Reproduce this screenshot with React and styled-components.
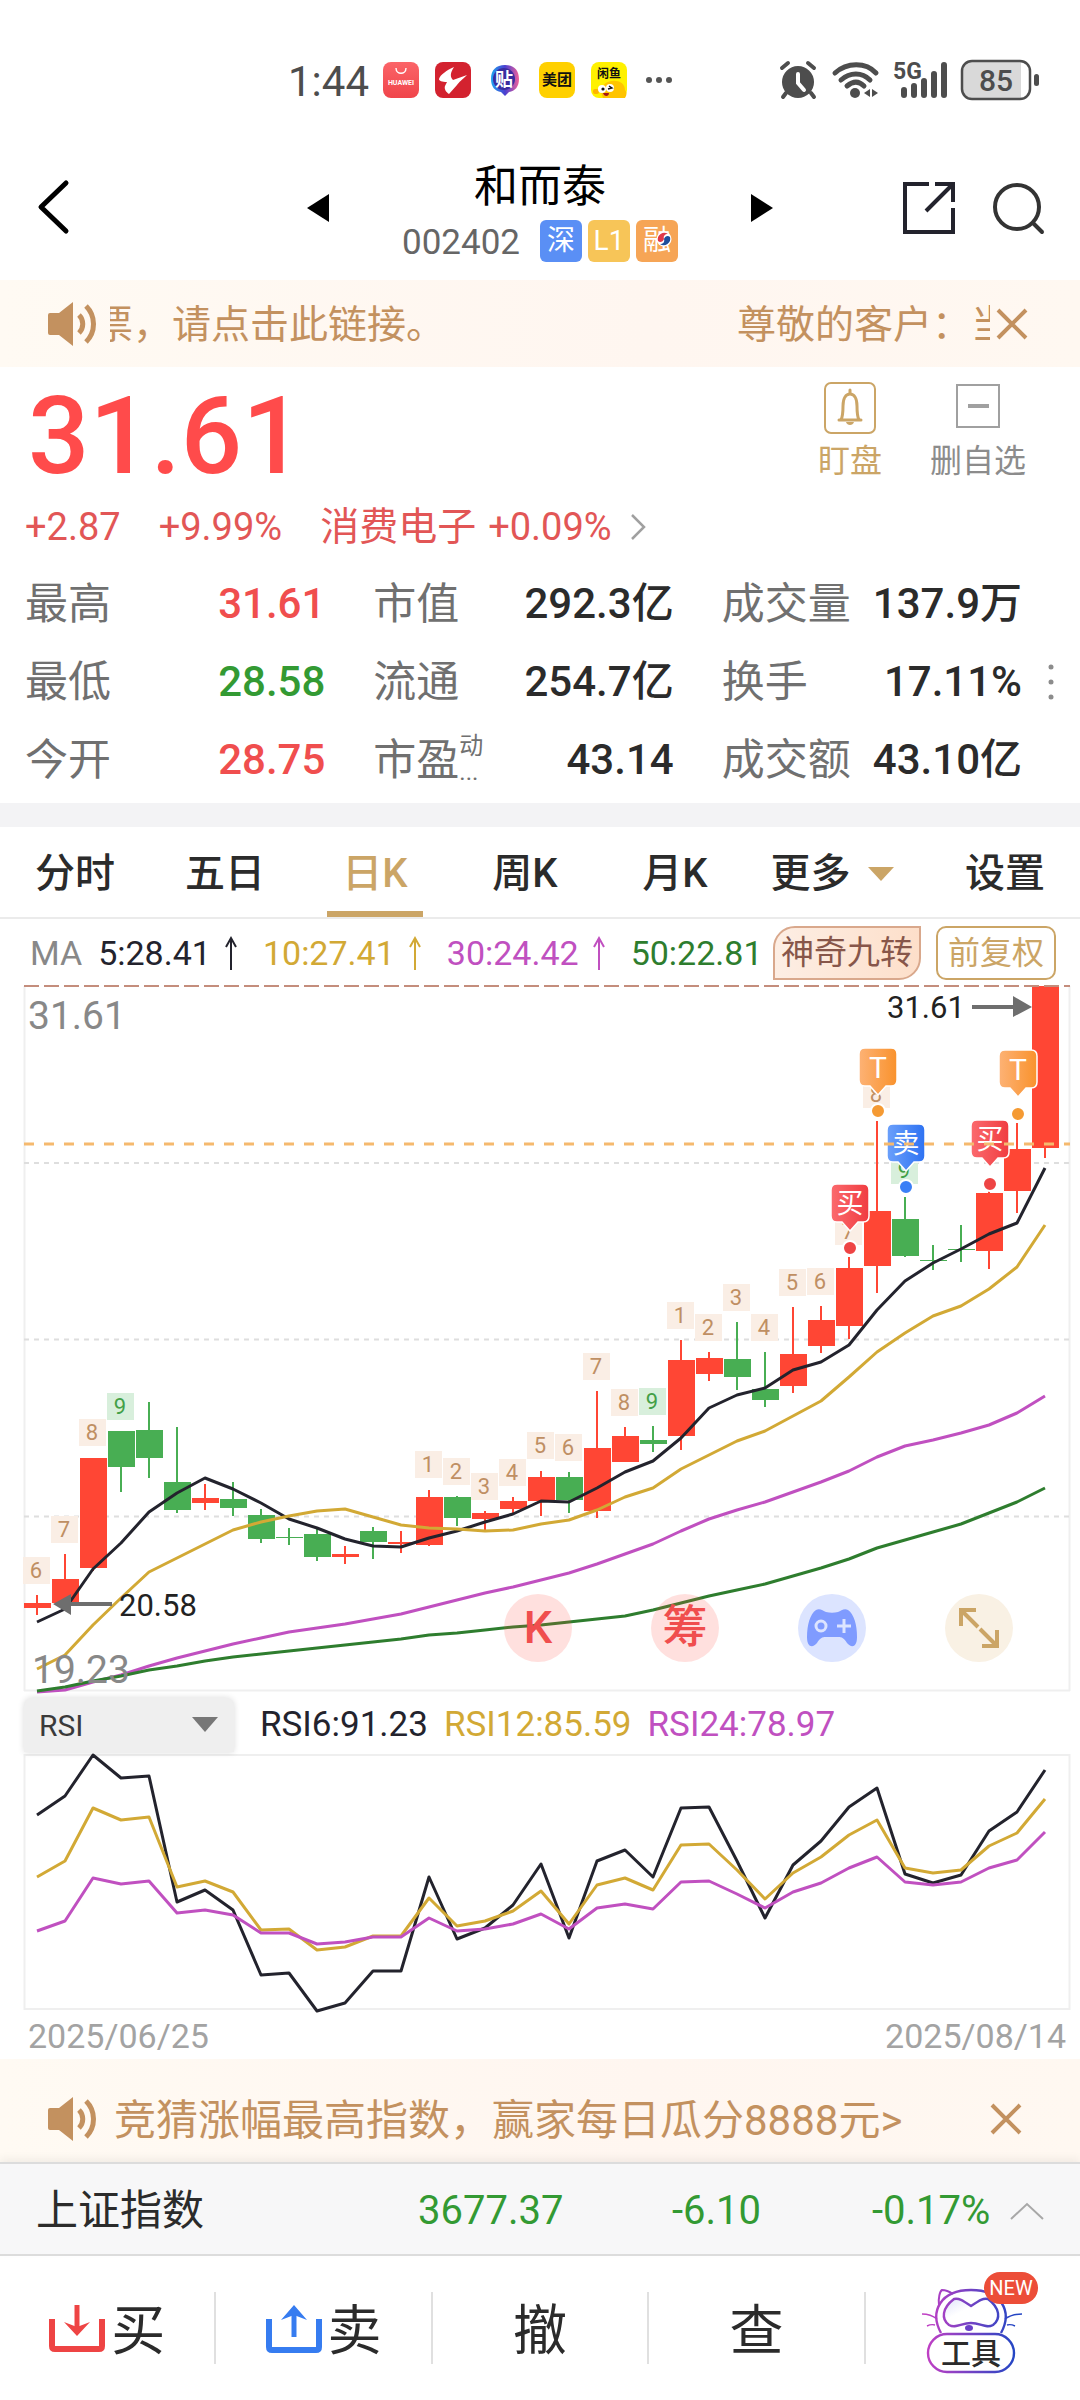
import React from "react";
import styled, { createGlobalStyle } from "styled-components";

const GlobalStyle = createGlobalStyle`
  * { box-sizing: border-box; }
  body {
    margin: 0;
    background: #fff;
    color: #2b2b2b;
    font-family: Roboto, "Noto Sans CJK SC", sans-serif;
    line-height: 1.2;
  }
  button {
    border: 0;
    padding: 0;
    background: none;
    color: inherit;
    font: inherit;
  }
  svg { display: block; flex: none; overflow: visible; }
  svg text { font-family: Roboto, "Noto Sans CJK SC", sans-serif; }
`;

const colors = {
  red: "#f04e4e",
  green: "#339a33",
  gold: "#cba566",
  tan: "#c3915f",
  dark: "#23232d",
  yellow: "#d2a935",
  purple: "#c050c0",
  deepGreen: "#2e7d2e",
  up: "#ff4634",
  down: "#48ae53",
};

/* ---------- status bar ---------- */

const StatusBar = styled.div`
  display: flex;
  align-items: center;
  justify-content: space-between;
  height: 136px;
  padding: 24px 40px 0 288px;
  color: #4d4d4d;
`;

const StatusGroup = styled.div`
  display: flex;
  align-items: center;
  gap: ${(p) => p.$gap}px;
`;

const Clock = styled.span`
  font-size: 42px;
  line-height: 48px;
  margin: 4px -4px 0 0;
`;

/* ---------- header ---------- */

const Header = styled.header`
  display: grid;
  grid-template-columns: 1fr 466px 1fr;
  align-items: center;
  height: 144px;
  padding: 0 35px;
`;

const HeaderCenter = styled.div`
  display: flex;
  align-items: center;
  justify-content: space-between;
`;

const StockName = styled.div`
  padding-top: 8px;
`;

const HeaderActions = styled.div`
  display: flex;
  align-items: center;
  justify-content: flex-end;
  gap: 38px;
`;

const Title = styled.h1`
  margin: 0;
  font-size: 44px;
  line-height: 54px;
  font-weight: 400;
  color: #000;
  text-align: center;
`;

const CodeRow = styled.div`
  display: flex;
  align-items: center;
  gap: 6px;
  margin-top: 4px;
`;

const Code = styled.span`
  margin-right: 14px;
  padding-top: 4px;
  font-size: 35px;
  line-height: 42px;
  color: #666;
`;

const MarketBadge = styled.span`
  position: relative;
  width: 42px;
  height: 42px;
  border-radius: 6px;
  background: ${(p) => p.$bg};
  color: #fff;
  font-size: 28px;
  line-height: 42px;
  text-align: center;
`;

const BadgeMark = styled.svg`
  position: absolute;
  left: 20px;
  top: 11px;
`;

/* ---------- notices ---------- */

const Notice = styled.div`
  display: flex;
  align-items: center;
  height: ${(p) => p.$height}px;
  padding: ${(p) => p.$pad};
  background: linear-gradient(90deg, #fffaf3, #fff6f0 60%, #fff8f1);
  color: ${colors.tan};
`;

const Marquee = styled.div`
  display: flex;
  flex: 1;
  justify-content: space-between;
  min-width: 0;
  margin: 0 6px 0 14px;
  padding-top: 3px;
  overflow: hidden;
  white-space: nowrap;
  font-size: 39px;
  line-height: 50px;
`;

const MarqueeTail = styled.span`
  margin-left: -16px;
`;

const MarqueeHead = styled.span`
  margin-right: -20px;
`;

const NoticeLink = styled.a`
  flex: 1;
  margin-left: 18px;
  padding-top: 5px;
  color: inherit;
  text-decoration: none;
  font-size: 42px;
  line-height: 50px;
`;

/* ---------- quote ---------- */

const Quote = styled.section`
  padding: 15px 0 4px;
`;

const QuoteTop = styled.div`
  display: flex;
  align-items: flex-start;
  padding: 0 54px 0 28px;
`;

const Price = styled.div`
  flex: 1;
  font-size: 108px;
  line-height: 108px;
  font-weight: 500;
  color: #ff4b4b;
`;

const QuoteAction = styled.button`
  display: flex;
  flex-direction: column;
  align-items: center;
  gap: 8px;
  margin-left: 48px;
  font-size: 32px;
  line-height: 38px;
  color: ${(p) => p.$color};
`;

const ChangeRow = styled.div`
  display: flex;
  align-items: center;
  height: 72px;
  margin-bottom: 3px;
  padding: 2px 25px 0;
  font-size: 38px;
  line-height: 48px;
  color: #e25656;
`;

const ChangeItem = styled.span`
  margin-right: 38px;
`;

const Sector = styled.a`
  display: flex;
  align-items: center;
  gap: 12px;
  color: inherit;
  text-decoration: none;
`;

const SectorName = styled.span`
  font-size: 39px;
`;

const StatsWrap = styled.div`
  display: flex;
  align-items: center;
`;

const Stats = styled.dl`
  flex: 1;
  display: grid;
  grid-template-columns: repeat(3, 1fr);
  column-gap: 48px;
  margin: 0;
  padding-left: 25px;
`;

const Stat = styled.div`
  display: flex;
  align-items: center;
  justify-content: space-between;
  height: 78px;
  white-space: nowrap;
`;

const StatLabel = styled.dt`
  display: flex;
  font-size: 43px;
  line-height: 54px;
  color: #707070;
`;

const StatValue = styled.dd`
  margin: 0;
  font-size: 42px;
  line-height: 54px;
  font-weight: 500;
  color: ${(p) => p.$color || "#2b2b2b"};
`;

const LabelExtra = styled.span`
  display: flex;
  flex-direction: column;
  font-size: 24px;
  line-height: 26px;
`;

const MoreDots = styled.button`
  display: flex;
  justify-content: center;
  width: 58px;
`;

/* ---------- tabs ---------- */

const Tabs = styled.nav`
  display: flex;
  height: 116px;
  border-top: 24px solid #f3f3f5;
  border-bottom: 2px solid #ebebeb;
`;

const Tab = styled.button`
  position: relative;
  display: flex;
  align-items: center;
  justify-content: center;
  flex: ${(p) => (p.$wide ? 6 : 5)} 0 0;
  padding-top: 4px;
  font-size: 40px;
  font-weight: 500;
  color: ${(p) => (p.$active ? colors.gold : "#2b2b2b")};

  &::after {
    content: "";
    display: ${(p) => (p.$active ? "block" : "none")};
    position: absolute;
    bottom: 0;
    width: 96px;
    height: 6px;
    background: ${colors.gold};
  }
`;

const TabCaret = styled.svg`
  margin: 0 16px 0 17px;
`;

/* ---------- indicator rows ---------- */

const MaRow = styled.div`
  display: flex;
  align-items: center;
  height: 66px;
  padding: 2px 24px 0 30px;
  font-size: 34px;
  white-space: nowrap;
`;

const MaName = styled.span`
  margin-right: 16px;
  color: #888;
`;

const MaValue = styled.span`
  display: flex;
  align-items: center;
  gap: 14px;
  margin-right: ${(p) => (p.$last ? 0 : 26)}px;
  color: ${(p) => p.$color};
`;

const MaButtons = styled.div`
  display: flex;
  gap: 15px;
  margin-left: auto;
`;

const NineButton = styled.button`
  height: 54px;
  padding: 0 6px;
  border: 2px solid #d9a88c;
  border-radius: 22px 0 22px 0;
  background: linear-gradient(90deg, #fdeee4, #fddfca);
  color: #87564a;
  font-size: 33px;
  line-height: 50px;
`;

const AdjustButton = styled.button`
  height: 54px;
  padding: 0 10px;
  border: 2px solid ${colors.gold};
  border-radius: 10px;
  color: ${colors.gold};
  font-size: 32px;
  line-height: 46px;
`;

const RsiRow = styled.div`
  display: flex;
  align-items: center;
  gap: 16px;
  height: 63px;
  padding: 4px 24px 0;
  font-size: 35px;
  white-space: nowrap;
`;

const RsiPicker = styled.label`
  position: relative;
  width: 210px;
  margin-right: 10px;
`;

const RsiSelect = styled.select`
  display: block;
  appearance: none;
  width: 100%;
  height: 54px;
  padding: 2px 15px 0;
  border: 0;
  border-radius: 8px 8px 0 0;
  background: #efefef;
  box-shadow: 0 0 6px rgba(0, 0, 0, 0.15);
  color: #3a3a3a;
  font: 30px Roboto, sans-serif;
`;

const SelectCaret = styled.svg`
  position: absolute;
  right: 16px;
  top: 19px;
  pointer-events: none;
`;

const RsiValue = styled.span`
  color: ${(p) => p.$color};
`;

/* ---------- charts ---------- */

const ChartBox = styled.div`
  position: relative;
`;

const Chart = styled.svg`
  width: 100%;
  height: auto;
`;

const FloatButtons = styled.div`
  position: absolute;
  right: 67px;
  bottom: 29px;
  display: flex;
  gap: 79px;
`;

const RoundButton = styled.button`
  display: flex;
  align-items: center;
  justify-content: center;
  width: 68px;
  height: 68px;
  border-radius: 50%;
  background: ${(p) => p.$bg};
  color: ${colors.red};
  font-size: 45px;
  line-height: 68px;
  font-weight: 500;
`;

const Dates = styled.div`
  display: flex;
  justify-content: space-between;
  height: 49px;
  padding: 0 14px 0 28px;
  font-size: 34px;
  line-height: 52px;
  color: #a3a3a3;
`;

/* ---------- footer ---------- */

const IndexBar = styled.div`
  display: grid;
  grid-template-columns: 382px 254px 200px 1fr;
  align-items: center;
  height: 94px;
  padding: 4px 36px 0;
  border-top: 2px solid #dcdcdc;
  border-bottom: 2px solid #dcdcdc;
  background: #f7f7f8;
  box-shadow: 0 -4px 8px rgba(0, 0, 0, 0.05);
  position: relative;
  font-size: 40px;
  line-height: 52px;
  color: ${colors.green};
`;

const IndexName = styled.span`
  font-size: 42px;
  color: #2b2b2b;
`;

const IndexRate = styled.span`
  display: flex;
  align-items: center;
  justify-content: space-between;
`;

const BottomNav = styled.nav`
  display: flex;
  align-items: center;
  height: 144px;
`;

const NavItem = styled.button`
  display: flex;
  align-items: center;
  justify-content: center;
  gap: 6px;
  flex: 1 0 0;
  height: 72px;
  border-right: ${(p) => (p.$last ? 0 : 2)}px solid #e0e0e0;
  font-size: 54px;
  line-height: 72px;
`;

const NavText = styled.span`
  padding-top: 8px;
`;

const CatDrawing = styled.svg`
  margin: 0 0 10px 20px;
`;

/* ---------- data ---------- */

const STEP = 28;
const cx = (i) => 37 + i * STEP;

// [direction, open/close top, bottom, wick top, wick bottom]
const candles = [
  ["u", 618, 623, 610, 630], ["u", 594, 618, 569, 618], ["u", 473, 583, 473, 586],
  ["d", 446, 482, 446, 507], ["d", 445, 473, 417, 493], ["d", 497, 525, 442, 528],
  ["u", 513, 518, 499, 525], ["d", 514, 523, 497, 531], ["d", 530, 554, 524, 558],
  ["d", 552, 553, 543, 560], ["d", 549, 572, 544, 576], ["u", 569, 572, 561, 579],
  ["d", 546, 557, 542, 574], ["u", 557, 559, 546, 568], ["u", 512, 560, 505, 561],
  ["d", 512, 533, 511, 541], ["u", 528, 534, 526, 547], ["u", 516, 524, 512, 530],
  ["u", 492, 516, 486, 531], ["d", 492, 515, 487, 528], ["u", 463, 526, 406, 533],
  ["u", 451, 477, 442, 477], ["d", 455, 459, 441, 467], ["u", 375, 451, 355, 465],
  ["u", 373, 389, 367, 396], ["d", 374, 392, 337, 405], ["d", 404, 415, 367, 422],
  ["u", 369, 401, 322, 408], ["u", 335, 361, 321, 368], ["u", 283, 341, 272, 354],
  ["u", 226, 281, 136, 308], ["d", 234, 271, 212, 272], ["d", 275, 276, 260, 285],
  ["d", 264, 265, 240, 277], ["u", 208, 266, 204, 284], ["u", 164, 206, 138, 228],
  ["u", 1, 163, 1, 173],
];

const ma5 = [637, 624, 584, 558, 527, 508, 493, 504, 518, 534, 543, 554, 561, 562, 553, 546, 537, 529, 516, 517, 503, 487, 476, 453, 423, 410, 403, 385, 377, 360, 325, 296, 278, 264, 249, 238, 183];
const ma10 = [684, 670, 640, 613, 587, 573, 559, 545, 537, 531, 526, 524, 532, 540, 543, 544, 546, 545, 539, 535, 525, 512, 503, 484, 470, 456, 446, 431, 416, 392, 367, 348, 331, 321, 304, 282, 240];
const ma30 = [707, 705, 697, 690, 681, 673, 666, 659, 653, 647, 643, 639, 634, 629, 622, 615, 608, 602, 595, 588, 579, 569, 559, 546, 534, 525, 517, 507, 497, 486, 472, 461, 455, 448, 440, 428, 411];
const ma50 = [706, 702, 696, 691, 685, 681, 676, 672, 669, 666, 663, 660, 657, 654, 650, 648, 645, 642, 640, 637, 634, 631, 625, 618, 611, 605, 599, 591, 583, 574, 563, 555, 547, 539, 528, 517, 503];

const rsi6 = [61, 42, 1, 24, 22, 148, 136, 156, 221, 219, 257, 249, 217, 217, 123, 185, 174, 151, 110, 184, 107, 96, 123, 54, 53, 107, 164, 111, 87, 53, 34, 120, 129, 121, 77, 58, 16];
const rsi12 = [123, 107, 54, 66, 63, 133, 127, 138, 176, 175, 196, 193, 182, 182, 144, 172, 167, 157, 137, 170, 131, 124, 136, 91, 90, 116, 145, 119, 103, 81, 66, 114, 119, 116, 92, 79, 45];
const rsi24 = [177, 167, 124, 130, 127, 159, 156, 161, 179, 179, 190, 188, 183, 183, 164, 177, 175, 170, 160, 175, 154, 150, 155, 128, 127, 140, 154, 138, 129, 114, 103, 128, 131, 128, 114, 106, 78];

// [candle index, count, top]
const counts = [
  [0, 6, 572], [1, 7, 531], [2, 8, 434], [3, 9, 408],
  [14, 1, 466], [15, 2, 473], [16, 3, 488], [17, 4, 474], [18, 5, 447], [19, 6, 449],
  [20, 7, 368], [21, 8, 404], [22, 9, 403],
  [23, 1, 317], [24, 2, 329], [25, 3, 299], [26, 4, 329], [27, 5, 284], [28, 6, 283],
  [29, 7, 233], [30, 8, 96], [31, 9, 172],
];

const pins = [
  { i: 29, y: 199, text: "买", kind: "buy", dot: 263 },
  { i: 30, y: 63, text: "T", kind: "both", dot: 126 },
  { i: 31, y: 139, text: "卖", kind: "sell", dot: 202 },
  { i: 34, y: 135, text: "买", kind: "buy", dot: 199 },
  { i: 35, y: 65, text: "T", kind: "both", dot: 129 },
];

const pinDots = { buy: "#ee4444", sell: "#3a7ff6", both: "#f59a33" };

const stats = [
  { label: "最高", value: "31.61", color: colors.red },
  { label: "市值", value: "292.3亿" },
  { label: "成交量", value: "137.9万" },
  { label: "最低", value: "28.58", color: colors.green },
  { label: "流通", value: "254.7亿" },
  { label: "换手", value: "17.11%" },
  { label: "今开", value: "28.75", color: colors.red },
  { label: "市盈", extra: true, value: "43.14" },
  { label: "成交额", value: "43.10亿" },
];

const toPoints = (values) => values.map((y, i) => `${cx(i)},${y}`).join(" ");

/* ---------- icons ---------- */

const Speaker = () => (
  <svg width="48" height="44" viewBox="0 0 48 44">
    <path d="M2 11h9L25 0v44L11 33H2a2 2 0 0 1-2-2V13a2 2 0 0 1 2-2z" fill={colors.tan} />
    <path d="M31 13c5 5 5 13 0 18M38 4c10 10 10 26 0 36" fill="none" stroke={colors.tan} strokeWidth="5" />
  </svg>
);

const Close = () => (
  <svg width="32" height="32" viewBox="0 0 32 32">
    <path d="M2 2l28 28M30 2L2 30" stroke={colors.tan} strokeWidth="4" />
  </svg>
);

const UpArrow = () => (
  <svg width="12" height="34" viewBox="0 0 12 34" fill="none" stroke="currentColor" strokeWidth="2">
    <path d="M6 2v32M1 11l5-9 5 9" />
  </svg>
);

const AppIcons = () => (
  <svg width="290" height="36" viewBox="0 0 290 36">
    <defs>
      <linearGradient id="hw" x2="0" y2="1">
        <stop stopColor="#fb6468" />
        <stop offset="1" stopColor="#f0454b" />
      </linearGradient>
      <linearGradient id="tb" x2="1">
        <stop stopColor="#1fa4f0" />
        <stop offset=".5" stopColor="#4a3fd0" />
        <stop offset="1" stopColor="#f0619a" />
      </linearGradient>
    </defs>
    <rect width="36" height="36" rx="8" fill="url(#hw)" />
    <path d="M13 6c0 7 10 7 10 0" fill="none" stroke="#fff" strokeWidth="1.4" />
    <text x="18" y="23" fontSize="7" fontWeight="700" fill="#fff" textAnchor="middle">HUAWEI</text>

    <rect x="52" width="36" height="36" rx="8" fill="#d3222f" />
    <path d="M71 5c-4 6-4 10-1 13l14-5c-5 5-8 7-10 10l-8 9c-3-2-5-5-4-8l2-4c-5 0-8-1-8-3 1-4 8-9 15-12z" fill="#fff" />

    <path d="M122 3c9 0 14 5 14 14 0 8-4 12-10 13l-4 4-4-4c-6-1-10-5-10-13 0-9 5-14 14-14z" fill="url(#tb)" />
    <circle cx="121" cy="17" r="11" fill="#3a2c9f" />
    <text x="121" y="24" fontSize="18" fontWeight="700" fill="#fff" textAnchor="middle">贴</text>

    <rect x="156" width="36" height="36" rx="8" fill="#ffd000" />
    <text x="174" y="23" fontSize="15" fontWeight="700" fill="#111" textAnchor="middle">美团</text>

    <rect x="208" width="36" height="36" rx="8" fill="#fff100" />
    <path d="M218 30c0-14 24-15 24-2 2 2 2 5 0 8h-22z" fill="#ffc400" />
    <rect x="210" y="27" width="6" height="5" rx="2" fill="#ffb400" />
    <text x="226" y="16" fontSize="12" fontWeight="700" fill="#111" textAnchor="middle">闲鱼</text>
    <circle cx="219" cy="27" r="4" fill="#fff" />
    <circle cx="227" cy="26" r="4" fill="#fff" />
    <circle cx="220" cy="27" r="1.6" fill="#111" />
    <path d="M225 27l4-1-3-2" stroke="#111" strokeWidth="1.4" fill="none" />
    <path d="M220 31h6c0 4-5 4-6 0z" fill="#a61616" />

    <g fill="#555">
      <circle cx="266" cy="18" r="3" />
      <circle cx="276" cy="18" r="3" />
      <circle cx="286" cy="18" r="3" />
    </g>
  </svg>
);

const SystemIcons = () => (
  <svg width="260" height="40" viewBox="0 0 260 40" fill="none" stroke="#4d4d4d" strokeLinecap="round">
    <circle cx="18" cy="22" r="16" fill="#4d4d4d" stroke="none" />
    <path d="M2 8l6-5M28 3l6 5M6 33l-3 4M31 33l3 4" strokeWidth="4" />
    <path d="M18 14v9l6 7" stroke="#fff" strokeWidth="4" />

    <path d="M55 13c12-11 31-11 41 0M61 20c9-8 21-8 29 0M67 26c6-5 12-5 17 0" strokeWidth="5" />
    <circle cx="75" cy="33" r="5" fill="#4d4d4d" stroke="none" />
    <path d="M90 29v8l-6-4zM92 29l6 4-6 4z" fill="#4d4d4d" stroke="none" />

    <text x="113" y="19" fontSize="23" fontWeight="700" fill="#4d4d4d" stroke="none">5G</text>
    <path d="M124 30v5M134 26v9M144 21v14M154 14v21M164 5v30" strokeWidth="6" />

    <rect x="183" y="2" width="66" height="36" rx="9" fill="#fff" stroke="none" />
    <path d="M192 2h49v36h-49c-6 0-9-3-9-9V11c0-6 3-9 9-9z" fill="#d9d9d9" stroke="none" />
    <rect x="182" y="1" width="68" height="38" rx="10" strokeWidth="2.5" />
    <rect x="254" y="14" width="5" height="12" rx="2.5" fill="#4d4d4d" stroke="none" />
    <text x="216" y="31" fontSize="30" fontWeight="500" fill="#4d4d4d" stroke="none" textAnchor="middle">85</text>
  </svg>
);

const CatTool = () => (
  <CatDrawing width="112" height="104" viewBox="0 0 112 104" fill="none">
    <defs>
      <linearGradient id="cat" x2="88" gradientUnits="userSpaceOnUse">
        <stop stopColor="#c03fc4" />
        <stop offset="1" stopColor="#2346c4" />
      </linearGradient>
      <linearGradient id="glass" x2="1" y2="1">
        <stop stopColor="#dfe2fb" />
        <stop offset=".4" stopColor="#fff" />
      </linearGradient>
    </defs>
    <g stroke="url(#cat)" strokeWidth="2.4" strokeLinejoin="round">
      <path d="M14 62C2 40 14 19 44 19s42 21 30 43" />
      <path d="M12 34c-1-7 1-14 3-15 3 0 8 2 11 4" strokeWidth="2" />
      <path d="M27 28c5-1 8 1 17 7 9-6 12-8 17-7 12 9 13 20 5 26-7 4-12-2-22-2s-15 6-22 2c-8-6-7-17 5-26z" fill="url(#glass)" />
      <path d="M10 48C5 44 0 43-5 43M8 54c-3-1-6 0-8 1M78 48c5-4 10-5 17-5M80 54c3-1 6 0 8 1" strokeWidth="1.4" />
      <rect x="1" y="63" width="86" height="38" rx="19" fill="#fff" />
    </g>
    <ellipse cx="42" cy="57" rx="4" ry="3" fill="#6a3fc8" />
    <text x="44" y="93" fontSize="30" fontWeight="500" fill="#2b2b2b" textAnchor="middle">工具</text>
    <rect x="57" y="1" width="54" height="32" rx="16" fill="#ec4d38" />
    <text x="84" y="24" fontSize="20" fill="#fff" textAnchor="middle">NEW</text>
  </CatDrawing>
);

/* ---------- chart parts ---------- */

const Candle = ({ i, data: [dir, top, bottom, high, low] }) => {
  const color = dir === "u" ? colors.up : colors.down;
  return (
    <g fill={color}>
      <rect x={cx(i) - 1} y={high} width="2" height={low - high} />
      <rect x={cx(i) - 13} y={top} width="27" height={bottom - top} />
    </g>
  );
};

const CountTag = ({ i, n, y }) => (
  <g>
    <rect x={cx(i) - 14} y={y} width="27" height="27" fill={n === 9 ? "#d8efdc" : "#faeee5"} />
    <text x={cx(i) - 1} y={y + 21} fontSize="22" textAnchor="middle" fill={n === 9 ? "#43a047" : "#bf8f63"}>
      {n}
    </text>
  </g>
);

const Pin = ({ i, y, text, kind, dot }) => (
  <g>
    <circle cx={cx(i) + 1} cy={dot} r="7" fill={pinDots[kind]} stroke="#fff" strokeWidth="2" />
    <g transform={`translate(${cx(i) - 18} ${y})`}>
      <path
        d="M6 0h26q6 0 6 6v26q0 6-6 6h-5l-8 9-8-9H6q-6 0-6-6V6q0-6 6-6z"
        fill={`url(#pin-${kind})`}
        stroke="#fff"
        strokeWidth="1.5"
      />
      <text x="19" y={text === "T" ? 30 : 29} fontSize={text === "T" ? 30 : 27} fill="#fff" textAnchor="middle">
        {text}
      </text>
    </g>
  </g>
);

const KLineChart = () => (
  <Chart viewBox="0 0 1080 706" role="img" aria-label="日K">
    <defs>
      <linearGradient id="pin-buy" x2="1"><stop stopColor="#fb6a6e" /><stop offset="1" stopColor="#f03c40" /></linearGradient>
      <linearGradient id="pin-sell" x2="1"><stop stopColor="#6ba0fb" /><stop offset="1" stopColor="#2e72f2" /></linearGradient>
      <linearGradient id="pin-both" x2="1"><stop stopColor="#fdb275" /><stop offset="1" stopColor="#f9922c" /></linearGradient>
    </defs>
    <path d="M24.500 1v705M1069.500 1v705M24 705.500h1046" stroke="#efefef" strokeWidth="2" fill="none" />
    <path d="M24 178h1046M24 354.500h1046M24 531.500h1046" stroke="#dedede" strokeWidth="2" strokeDasharray="5 5" />
    {candles.map((c, i) => <Candle key={i} i={i} data={c} />)}
    <path d="M24 1h1046" stroke="#c48d7c" strokeWidth="2" strokeDasharray="15 5" />
    {counts.map(([i, n, y]) => <CountTag key={i} i={i} n={n} y={y} />)}
    {pins.map((p) => <Pin key={p.i} {...p} />)}
    <path d="M24 159h1046" stroke="#f5b96e" strokeWidth="3" strokeDasharray="10 10" />
    <g fill="none" strokeWidth="3" strokeLinejoin="round">
      <polyline points={toPoints(ma5)} stroke={colors.dark} />
      <polyline points={toPoints(ma10)} stroke={colors.yellow} />
      <polyline points={toPoints(ma30)} stroke={colors.purple} />
      <polyline points={toPoints(ma50)} stroke={colors.deepGreen} />
    </g>
    <g fill="#6e6e6e">
      <path d="M972 20h41v-9l19 11-19 10v-8h-41z" />
      <path d="M112 617H71v-8l-18 10 18 11v-9h41z" />
    </g>
    <g fontSize="31" fill="#222">
      <text x="887" y="33">31.61</text>
      <text x="119" y="631">20.58</text>
    </g>
    <g fontSize="39" fill="#888">
      <text x="28" y="44">31.61</text>
      <text x="32" y="698">19.23</text>
    </g>
  </Chart>
);

const RsiChart = () => (
  <Chart viewBox="0 0 1080 256" role="img" aria-label="RSI">
    <rect x="24.500" y="1" width="1045" height="254" fill="none" stroke="#efefef" strokeWidth="2" />
    <g fill="none" strokeWidth="3" strokeLinejoin="round">
      <polyline points={toPoints(rsi6)} stroke={colors.dark} />
      <polyline points={toPoints(rsi12)} stroke={colors.yellow} />
      <polyline points={toPoints(rsi24)} stroke={colors.purple} />
    </g>
  </Chart>
);

export default function App() {
  return (
    <main lang="zh-CN">
      <GlobalStyle />

      <StatusBar>
        <StatusGroup $gap={18}>
          <Clock>1:44</Clock>
          <AppIcons />
        </StatusGroup>
        <SystemIcons />
      </StatusBar>

      <Header>
        <button aria-label="返回">
          <svg width="36" height="56" viewBox="0 0 36 56" fill="none" stroke="#000" strokeWidth="5" strokeLinecap="round" strokeLinejoin="round">
            <path d="M31 3L6 27l25 24" />
          </svg>
        </button>
        <HeaderCenter>
          <button aria-label="上一只">
            <svg width="22" height="28" viewBox="0 0 22 28"><path d="M22 0v28L0 14z" /></svg>
          </button>
          <StockName>
            <Title>和而泰</Title>
            <CodeRow>
              <Code>002402</Code>
              <MarketBadge $bg="#5a8ff5">深</MarketBadge>
              <MarketBadge $bg="#f7c558">L1</MarketBadge>
              <MarketBadge $bg="#f6a556">
                融
                <BadgeMark width="16" height="16" viewBox="0 0 16 16">
                  <circle cx="8" cy="8" r="7.500" fill="#fff" />
                  <path d="M2 10a6.500 6.500 0 0 1 10-7c-3 0-5 2-4 5-1 3-4 4-6 2z" fill="#e0394a" />
                  <path d="M14 6a6.500 6.500 0 0 1-10 7c3 0 5-2 4-5 1-3 4-4 6-2z" fill="#1e4f9c" />
                </BadgeMark>
              </MarketBadge>
            </CodeRow>
          </StockName>
          <button aria-label="下一只">
            <svg width="22" height="28" viewBox="0 0 22 28"><path d="M0 0v28l22-14z" /></svg>
          </button>
        </HeaderCenter>
        <HeaderActions>
          <button aria-label="分享">
            <svg width="52" height="52" viewBox="0 0 52 52" fill="none" stroke="#23232d" strokeWidth="4">
              <path d="M26 2H2v48h48V26M32 2h18v18M49 3L23 29" />
            </svg>
          </button>
          <button aria-label="搜索">
            <svg width="52" height="52" viewBox="0 0 52 52" fill="none" stroke="#333" strokeWidth="4" strokeLinecap="round">
              <circle cx="24" cy="25" r="22" />
              <path d="M40 41l9 9" />
            </svg>
          </button>
        </HeaderActions>
      </Header>

      <Notice $height={87} $pad="0 52px 0 48px">
        <Speaker />
        <Marquee>
          <MarqueeTail>票，请点击此链接。</MarqueeTail>
          <MarqueeHead>尊敬的客户：当</MarqueeHead>
        </Marquee>
        <button aria-label="关闭"><Close /></button>
      </Notice>

      <Quote>
        <QuoteTop>
          <Price>31.61</Price>
          <QuoteAction $color={colors.gold}>
            <svg width="52" height="52" viewBox="0 0 52 52" fill="none" stroke={colors.gold}>
              <rect x="1" y="1" width="50" height="50" rx="6" strokeWidth="2" />
              <path d="M15 38h22M17 38c2-4 2-8 2-14 0-8 3-12 7-12s7 4 7 12c0 6 0 10 2 14M26 8v4" strokeWidth="3" strokeLinecap="round" />
              <path d="M22 40h8c-1 4-7 4-8 0z" fill={colors.gold} stroke="none" />
            </svg>
            盯盘
          </QuoteAction>
          <QuoteAction $color="#8c8c8c">
            <svg width="52" height="52" viewBox="0 0 52 52" fill="none" stroke="#a0a0a0">
              <rect x="5" y="3" width="42" height="42" strokeWidth="2" />
              <path d="M16 24h21" strokeWidth="4" />
            </svg>
            删自选
          </QuoteAction>
        </QuoteTop>

        <ChangeRow>
          <ChangeItem>+2.87</ChangeItem>
          <ChangeItem>+9.99%</ChangeItem>
          <Sector href="#sector">
            <SectorName>消费电子</SectorName>
            <span>+0.09%</span>
            <svg width="24" height="28" viewBox="0 0 24 28" fill="none" stroke="#a0a0a0" strokeWidth="2.500">
              <path d="M8 2l12 12L8 26" />
            </svg>
          </Sector>
        </ChangeRow>

        <StatsWrap>
          <Stats>
            {stats.map((s) => (
              <Stat key={s.label}>
                <StatLabel>
                  {s.label}
                  {s.extra && (
                    <LabelExtra>
                      <span>动</span>
                      <span>...</span>
                    </LabelExtra>
                  )}
                </StatLabel>
                <StatValue $color={s.color}>{s.value}</StatValue>
              </Stat>
            ))}
          </Stats>
          <MoreDots aria-label="更多行情">
            <svg width="6" height="36" viewBox="0 0 6 36" fill="#8c8c8c">
              <circle cx="3" cy="3" r="2.500" />
              <circle cx="3" cy="18" r="2.500" />
              <circle cx="3" cy="33" r="2.500" />
            </svg>
          </MoreDots>
        </StatsWrap>
      </Quote>

      <Tabs>
        <Tab>分时</Tab>
        <Tab>五日</Tab>
        <Tab $active>日K</Tab>
        <Tab>周K</Tab>
        <Tab>月K</Tab>
        <Tab $wide>
          更多
          <TabCaret width="26" height="14" viewBox="0 0 26 14"><path d="M0 0h26L13 14z" fill={colors.gold} /></TabCaret>
        </Tab>
        <Tab>设置</Tab>
      </Tabs>

      <MaRow>
        <MaName>MA</MaName>
        <MaValue $color={colors.dark}>5:28.41<UpArrow /></MaValue>
        <MaValue $color={colors.yellow}>10:27.41<UpArrow /></MaValue>
        <MaValue $color={colors.purple}>30:24.42<UpArrow /></MaValue>
        <MaValue $color={colors.deepGreen} $last>50:22.81</MaValue>
        <MaButtons>
          <NineButton>神奇九转</NineButton>
          <AdjustButton>前复权</AdjustButton>
        </MaButtons>
      </MaRow>

      <ChartBox>
        <KLineChart />
        <FloatButtons>
          <RoundButton $bg="rgba(255, 70, 60, 0.17)">K</RoundButton>
          <RoundButton $bg="rgba(255, 70, 60, 0.17)">筹</RoundButton>
          <RoundButton $bg="#dce4ff" aria-label="游戏">
            <svg width="52" height="40" viewBox="0 0 52 40">
              <path d="M10 2c4-2 7 1 10 2 4 1 8 1 12 0 3-1 6-4 10-2 6 4 9 15 9 27 0 11-6 11-10 6-3-5-5-6-9-6H20c-4 0-6 1-9 6-4 5-10 5-10-6C1 17 4 6 10 2z" fill="#7f9bff" />
              <circle cx="15" cy="18" r="5" fill="none" stroke="#dce4ff" strokeWidth="3" />
              <path d="M38 11v14M31 18h14" stroke="#dce4ff" strokeWidth="3" />
            </svg>
          </RoundButton>
          <RoundButton $bg="#f9f1e4" aria-label="全屏">
            <svg width="42" height="42" viewBox="0 0 42 42" fill="none" stroke={colors.gold} strokeWidth="4">
              <path d="M18 3H3v16M3 3l17 17M24 39h15V23M39 39L22 22" />
            </svg>
          </RoundButton>
        </FloatButtons>
      </ChartBox>

      <RsiRow>
        <RsiPicker>
          <RsiSelect aria-label="指标" defaultValue="RSI">
            <option>RSI</option>
          </RsiSelect>
          <SelectCaret width="26" height="15" viewBox="0 0 26 15"><path d="M0 0h26L13 15z" fill="#777" /></SelectCaret>
        </RsiPicker>
        <RsiValue $color={colors.dark}>RSI6:91.23</RsiValue>
        <RsiValue $color={colors.yellow}>RSI12:85.59</RsiValue>
        <RsiValue $color={colors.purple}>RSI24:78.97</RsiValue>
      </RsiRow>

      <RsiChart />

      <Dates>
        <span>2025/06/25</span>
        <span>2025/08/14</span>
      </Dates>

      <Notice $height={103} $pad="16px 58px 0 48px">
        <Speaker />
        <NoticeLink href="#guess">竞猜涨幅最高指数，赢家每日瓜分8888元&gt;</NoticeLink>
        <button aria-label="关闭活动"><Close /></button>
      </Notice>

      <IndexBar>
        <IndexName>上证指数</IndexName>
        <span>3677.37</span>
        <span>-6.10</span>
        <IndexRate>
          -0.17%
          <svg width="34" height="18" viewBox="0 0 34 18" fill="none" stroke="#a8a8a8" strokeWidth="2">
            <path d="M1 17L17 2l16 15" />
          </svg>
        </IndexRate>
      </IndexBar>

      <BottomNav>
        <NavItem>
          <svg width="56" height="50" viewBox="0 0 56 50" fill="none" stroke="#ee4444" strokeWidth="6">
            <path d="M3 16v27q0 3 3 3h44q3 0 3-3V16" />
            <path d="M28 2v22" strokeWidth="5" />
            <path d="M15 19l13 14 13-14-13 5z" fill="#ee4444" stroke="none" />
          </svg>
          <NavText>买</NavText>
        </NavItem>
        <NavItem>
          <svg width="56" height="50" viewBox="0 0 56 50" fill="none" stroke="#367cf0" strokeWidth="6">
            <path d="M3 16v28q0 3 3 3h44q3 0 3-3V16" />
            <path d="M28 10v24" strokeWidth="5" />
            <path d="M15 17L28 2l13 15-13-5z" fill="#367cf0" stroke="none" />
          </svg>
          <NavText>卖</NavText>
        </NavItem>
        <NavItem><NavText>撤</NavText></NavItem>
        <NavItem><NavText>查</NavText></NavItem>
        <NavItem $last aria-label="工具">
          <CatTool />
        </NavItem>
      </BottomNav>
    </main>
  );
}
